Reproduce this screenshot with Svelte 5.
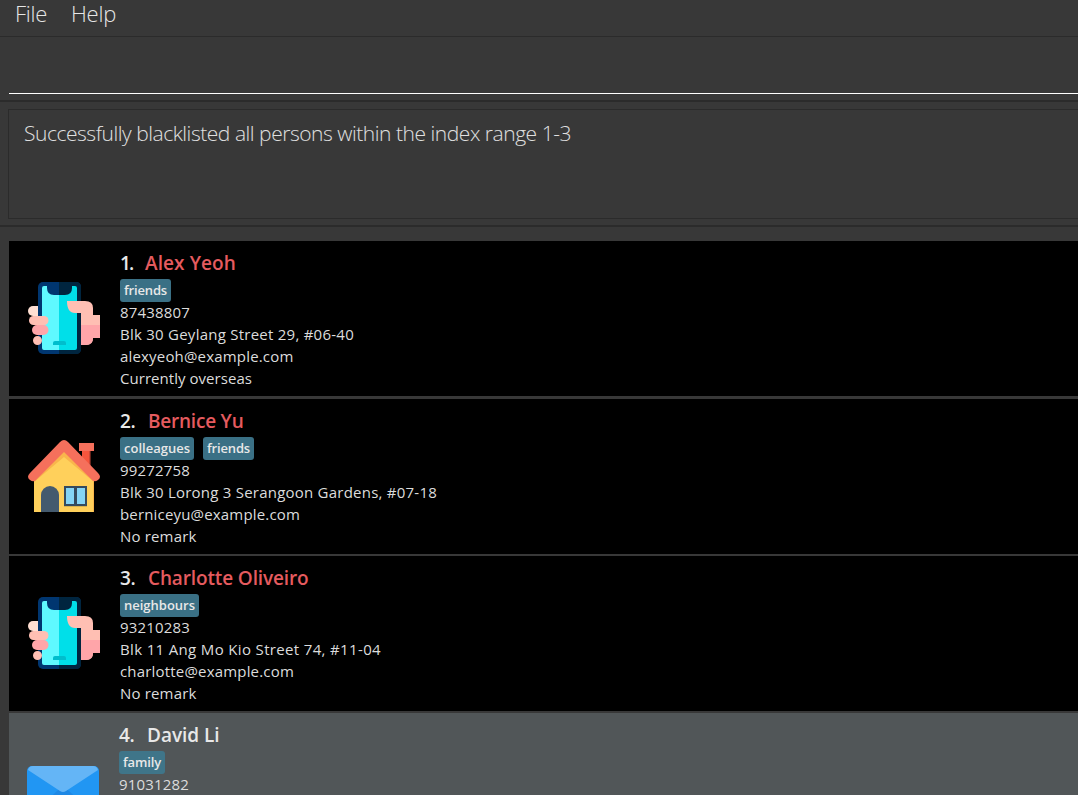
<script>
  // Spreads a line's letters so that it takes up the given width.
  function fit(node, width) {
    const natural = node.getBoundingClientRect().width;
    node.style.letterSpacing = `${(width - natural) / node.textContent.length}px`;
  }

  const menus = [
    { label: 'File', width: 32 },
    { label: 'Help', width: 45 }
  ];

  const people = [
    {
      icon: 'phone', listed: true, height: 155, gap: 3, nameAt: 25,
      name: ['Alex Yeoh', 91], tags: [['friends', 43]],
      lines: [['87438807', 70], ['Blk 30 Geylang Street 29, #06-40', 234], ['alexyeoh@example.com', 173.5], ['Currently overseas', 132]]
    },
    {
      icon: 'house', listed: true, height: 155, gap: 2, nameAt: 28,
      name: ['Bernice Yu', 95.5], tags: [['colleagues', 66], ['friends', 43]],
      lines: [['99272758', 70], ['Blk 30 Lorong 3 Serangoon Gardens, #07-18', 317], ['berniceyu@example.com', 180], ['No remark', 76.5]]
    },
    {
      icon: 'phone', listed: true, height: 155, gap: 2, nameAt: 28,
      name: ['Charlotte Oliveiro', 160.5], tags: [['neighbours', 71]],
      lines: [['93210283', 70], ['Blk 11 Ang Mo Kio Street 74, #11-04', 261], ['charlotte@example.com', 174], ['No remark', 76.5]]
    },
    {
      icon: 'mail', listed: false, height: 155, gap: 2, nameAt: 28,
      name: ['David Li', 72.5], tags: [['family', 38]],
      lines: [['91031282', 70]]
    }
  ];
</script>

<div class="window">
  <nav>
    {#each menus as m}
      <span class="menu"><span use:fit={m.width}>{m.label}</span></span>
    {/each}
  </nav>
  <div class="command"><div class="field"></div></div>
  <div class="result">
    <div class="message"><span use:fit={547}>Successfully blacklisted all persons within the index range 1-3</span></div>
  </div>
  <main>
    {#each people as p, i}
      <article class:listed={p.listed} style="height: {p.height}px; margin-bottom: {p.gap}px">
        <div class="picture">
          {#if p.icon === 'phone'}
            <svg width="72" height="72" viewBox="0 0 72 72">
              <rect x="10" y="0" width="43" height="72" rx="5" fill="#003670" />
              <path d="M31 0h17q5 0 5 5v62q0 5-5 5H31z" fill="#00253f" />
              <path d="M14 6q0-2 2-2h3v2q0 7 7 7h5v55H16q-2 0-2-2z" fill="#5ff9ff" />
              <path d="M31 13h6q7 0 7-7V4h3q2 0 2 2v60q0 2-2 2H31z" fill="#00dfe9" />
              <path d="M25 63v-2q0-2 2-2h9q2 0 2 2v2z" fill="#00becd" />
              <path d="M5 24h5v10H5a5 5 0 0 1 0-10z" fill="#ffdfd2" />
              <rect x="1" y="34" width="19.500" height="9" rx="4.500" fill="#ffbfb3" />
              <rect x="4" y="43" width="16.500" height="10" rx="5" fill="#ffa5a9" />
              <path d="M9.500 54a4.500 4.500 0 0 1 4.500 4.500v0a4.500 4.500 0 0 1-9 0v0a4.500 4.500 0 0 1 4.500-4.500z" fill="#ffbfb3" />
              <path d="M39 19h18q8 0 8 7v7h7v23h-7q0 7-7 7h-5V31h-6q-8 0-8-12z" fill="#ffbfb3" />
              <path d="M53 43h19v13h-7q0 7-7 7h-5z" fill="#ffa5a9" />
            </svg>
          {:else if p.icon === 'house'}
            <svg width="72" height="72" viewBox="0 0 72 72">
              <path d="M54 8h8v23l-8-8z" fill="#f5553d" />
              <path d="M61 8h1.500v20H61z" fill="#c94736" />
              <path d="M51 3h15v8H51z" fill="#f5705c" />
              <path d="M6 37L36 10l30 27v35H6z" fill="#ffd05b" />
              <path d="M6 37L36 10l30 27v5L36 17 6 42z" fill="#f9b54c" />
              <path d="M65 40h1v32h-1z" fill="#f9b54c" />
              <path d="M36 0q2 0 4 2l30 31q4 4 0 7-4 3-7-1L36 12 9 39q-3 4-7 1-4-3 0-7L32 2q2-2 4-2z" fill="#f5705c" />
              <path d="M13 72V55a9 9 0 0 1 18 0v17z" fill="#445a6e" />
              <path d="M36 66h23v1H36z" fill="#d8b251" />
              <path d="M36 46h23v20H36z" fill="#344a5e" />
              <path d="M38 48h8v16h-8zm11 0h8v16h-8z" fill="#84d4f6" />
            </svg>
          {:else}
            <svg width="72" height="72" viewBox="0 0 72 72">
              <rect width="72" height="54" rx="5" fill="#2196f3" />
              <path d="M2 52l28-27q6-6 12 0l28 27q-2 2-4 2H6q-3 0-4-2z" fill="#1e88e5" />
              <path d="M1 4q1-4 5-4h60q4 0 5 4L39 25q-3 2-6 0z" fill="#64b5f6" />
            </svg>
          {/if}
        </div>
        <div class="details">
          <div class="title">
            <span class="index" style="width: {p.nameAt}px"><span use:fit={i === 0 ? 12.5 : 15.5}>{i + 1}.</span></span><span class="name" use:fit={p.name[1]}>{p.name[0]}</span>
          </div>
          <div class="tags">
            {#each p.tags as t}
              <span class="tag"><span use:fit={t[1]}>{t[0]}</span></span>
            {/each}
          </div>
          {#each p.lines as l}
            <div class="line"><span use:fit={l[1]}>{l[0]}</span></div>
          {/each}
        </div>
      </article>
    {/each}
  </main>
</div>

<style>
  :global(body) {
    margin: 0;
    overflow: hidden;
  }
  .window {
    width: 1078px;
    height: 795px;
    overflow: hidden;
    background: #383838;
    font-family: "Open Sans", "Noto Sans", sans-serif;
    white-space: nowrap;
  }
  nav {
    display: flex;
    gap: 24px;
    height: 37px;
    padding-left: 15px;
    box-sizing: border-box;
    border-bottom: 1px solid #2b2b2b;
    color: #e6e6e6;
    font-size: 22px;
    font-weight: 300;
    line-height: 26px;
  }
  .menu:first-child {
    width: 32px;
  }
  .command {
    box-sizing: border-box;
    height: 65px;
    padding: 0 0 6px 9px;
    border-bottom: 2px solid #2b2b2b;
  }
  .field {
    height: 56px;
    border-bottom: 1px solid #fff;
  }
  .result {
    box-sizing: border-box;
    height: 125px;
    padding: 7px 0 0 8px;
    border-bottom: 2px solid #2b2b2b;
  }
  .message {
    box-sizing: border-box;
    height: 110px;
    padding: 9px 0 0 15px;
    border: 1px solid #2b2b2b;
    border-right: 0;
    color: #e0e0e0;
    font-size: 21px;
    font-weight: 300;
    line-height: 28px;
  }
  main {
    padding: 14px 0 0 9px;
  }
  article {
    display: flex;
    box-sizing: border-box;
    background: #515658;
    color: #e8e8e8;
    padding-left: 18px;
  }
  article.listed {
    background: #000;
    padding-left: 19px;
  }
  .picture {
    padding-top: 41px;
    width: 92px;
  }
  article:last-child .picture {
    padding-top: 53px;
  }
  svg {
    display: block;
  }
  .title {
    display: flex;
    height: 38px;
    font-size: 19px;
    font-weight: 600;
    line-height: 45px;
  }
  .listed .name {
    color: #e55b5f;
  }
  .tags {
    display: flex;
    gap: 9px;
    height: 22px;
  }
  .tag {
    height: 23px;
    padding: 0 4px;
    border-radius: 3px;
    background: #3a7085;
    font-size: 13px;
    font-weight: 600;
    line-height: 22px;
  }
  article:last-child .tag {
    background: #3f7589;
  }
  .line {
    height: 22px;
    color: #dcdcdc;
    font-size: 15px;
    line-height: 22px;
  }
</style>
